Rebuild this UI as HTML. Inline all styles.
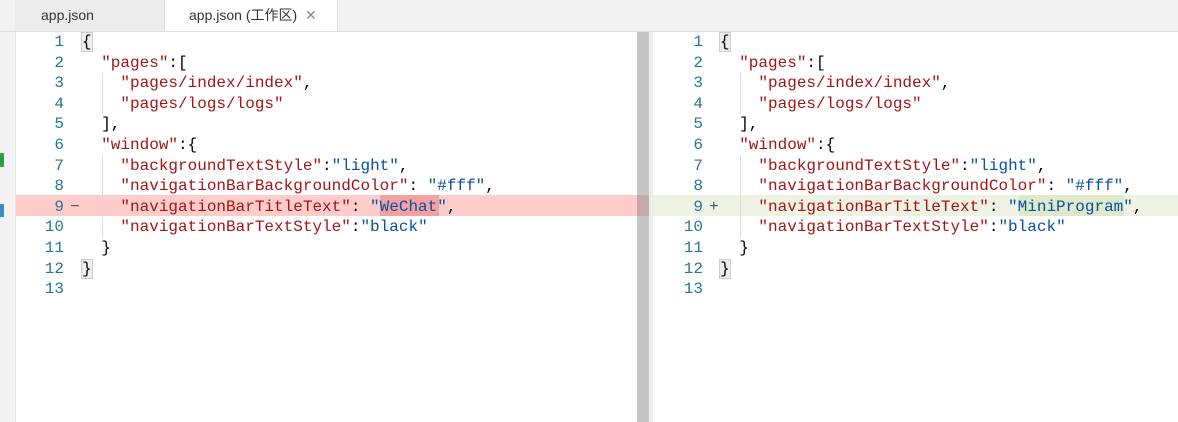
<!DOCTYPE html>
<html><head><meta charset="utf-8"><style>
body{margin:0;width:1178px;height:422px;overflow:hidden;background:#fff;font-family:"Liberation Sans","Noto Sans CJK SC",sans-serif;position:relative}
.tabs{position:absolute;left:0;top:0;width:1178px;height:31px;background:#f3f3f3;border-bottom:1px solid #e0e0e0}
.tab{position:absolute;top:0;height:31px;line-height:31px;font-size:14px;color:#333}
.side{position:absolute;left:0;top:32px;width:15px;height:390px;background:#f3f3f3;border-right:1px solid #e4e4e4}
.pane{position:absolute;top:32px;font-family:"Liberation Mono",monospace;font-size:16px}
.ln{position:absolute;height:20.6px;line-height:20.6px;white-space:pre}
.n{position:absolute;width:30px;text-align:right;color:#237893}
.s{color:#a31515}.v{color:#0451a5}.p{color:#000}
.guide{position:absolute;border-left:1px solid #ddd}
</style></head><body>
<div class="tabs">
<div class="tab" style="left:15px;width:150px;background:#ececec;border-right:1px solid #ddd;padding-left:26px;box-sizing:border-box">app.json</div>
<div class="tab" style="left:165px;width:173px;background:#fff;border-right:1px solid #ddd;padding-left:24px;box-sizing:border-box">app.json (工作区) <span style="color:#888;margin-left:4px">✕</span></div>
</div>
<div class="side"></div>
<div style="position:absolute;left:0;top:153px;width:4px;height:14px;background:#2ea043"></div>
<div style="position:absolute;left:0;top:204px;width:4px;height:13px;background:#3c8dd0"></div>
<div style="position:absolute;left:16px;top:195px;width:621px;height:21px;background:#ffcccc"></div>
<div style="position:absolute;left:380px;top:195px;width:59px;height:21px;background:#f4a0a0"></div>
<div style="position:absolute;left:637px;top:32px;width:12px;height:390px;background:#c6c6c6"></div>
<div style="position:absolute;left:649px;top:32px;width:4px;height:390px;background:#ececec"></div>
<div style="position:absolute;left:653px;top:195px;width:525px;height:21px;background:#eef2e2"></div>
<div style="position:absolute;left:1019px;top:195px;width:105px;height:21px;background:#dfe8c8"></div>
<div style="position:absolute;left:600px;top:195px;width:37px;height:21px;background:#ffcccc"></div>
<div style="position:absolute;left:637px;top:195px;width:12px;height:21px;background:#c6a8a8"></div>

<div id="L"></div>
<script>
var lines=[
'<span class="p" style="background:#eee;outline:1px solid #ccc">{</span>',
'  <span class="s">"pages"</span>:[',
'    <span class="s">"pages/index/index"</span>,',
'    <span class="s">"pages/logs/logs"</span>',
'  ],',
'  <span class="s">"window"</span>:{',
'    <span class="s">"backgroundTextStyle"</span>:<span class="v">"light"</span>,',
'    <span class="s">"navigationBarBackgroundColor"</span>: <span class="v">"#fff"</span>,',
'X',
'    <span class="s">"navigationBarTextStyle"</span>:<span class="v">"black"</span>',
'  }',
'<span class="p" style="background:#eee;outline:1px solid #ccc">}</span>',
''];
function pane(left,numRight,codeLeft,l9,mark){
 var h='<div class="pane" style="left:'+left+'px">';
 h+='<div class="guide" style="left:'+(codeLeft+20-left)+'px;top:41px;height:41px"></div>';
 h+='<div class="guide" style="left:'+(codeLeft+20-left)+'px;top:124px;height:82px"></div>';
 for(var i=0;i<13;i++){
  var t=lines[i]=='X'?l9:lines[i];
  h+='<div class="ln" style="top:'+(i*20.6)+'px;left:0"><span class="n" style="left:'+(numRight-30-left)+'px">'+(i+1)+'</span>'+(i==8?'<span style="position:absolute;left:'+(numRight+6-left)+'px;color:#555">'+mark+'</span>':'')+'<span style="position:absolute;left:'+(codeLeft-left)+'px">'+t+'</span></div>';
 }
 return h+'</div>';
}
document.getElementById('L').innerHTML=
 pane(0,64,82,'    <span class="s">"navigationBarTitleText"</span>: <span class="v">"WeChat"</span>,','−')+
 pane(653,703,720,'    <span class="s">"navigationBarTitleText"</span>: <span class="v">"MiniProgram"</span>,','+');
</script>
</body></html>
